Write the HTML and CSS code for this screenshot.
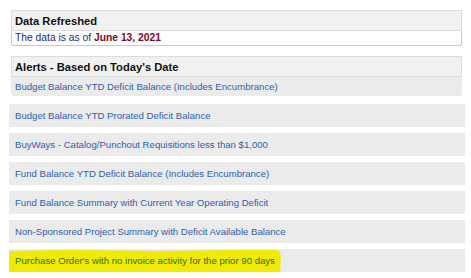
FILE: index.html
```html
<!DOCTYPE html>
<html>
<head>
<meta charset="utf-8">
<link rel="stylesheet" href="styles.css">
</head>
<body>
<div class="page">
  <section class="panel refresh">
    <div class="panel-head">Data Refreshed</div>
    <div class="panel-body">The data is as of <b class="date">June 13, 2021</b></div>
  </section>
  <section class="panel alerts">
    <div class="panel-head">Alerts - Based on Today's Date</div>
    <div class="panel-item">Budget Balance YTD Deficit Balance (Includes Encumbrance)</div>
  </section>
  <ul class="list">
    <li class="item">Budget Balance YTD Prorated Deficit Balance</li>
    <li class="item">BuyWays - Catalog/Punchout Requisitions less than $1,000</li>
    <li class="item">Fund Balance YTD Deficit Balance (Includes Encumbrance)</li>
    <li class="item">Fund Balance Summary with Current Year Operating Deficit</li>
    <li class="item">Non-Sponsored Project Summary with Deficit Available Balance</li>
    <li class="item marked">
      <svg class="marker" width="276" height="29" viewBox="0 0 276 29" aria-hidden="true">
        <path d="M0 2 L60 1 L150 2 L230 1 L268 1 L271 3 L272 9 L271 18 L272 24 L270 27 L200 27 L120 28 L40 27 L0 28 Z" fill="#eeea00"/>
      </svg>
      <span class="marked-text">Purchase Order's with no invoice activity for the prior 90 days</span>
    </li>
  </ul>
</div>
</body>
</html>
```

FILE: styles.css
```css
html, body {
  margin: 0;
  padding: 0;
  background: #ffffff;
}
.page {
  padding: 10px 6px 0 9px;
  font-family: "Liberation Sans", Arial, sans-serif;
}
.panel {
  margin: 0 3px 0 2px;
}
.panel-head {
  height: 19px;
  line-height: 20px;
  background: #f1f1f1;
  border: 1px solid #dcdcdc;
  padding-left: 3px;
  font-weight: bold;
  font-size: 11.2px;
  color: #111111;
}
.panel-body {
  height: 14px;
  line-height: 14px;
  background: #ffffff;
  border: 1px solid #c7c8d0;
  border-top: none;
  border-radius: 0 0 3px 3px;
  padding-left: 3px;
  font-size: 10.3px;
  color: #1f2a78;
}
.date {
  color: #7a0a2a;
}
.refresh {
  margin-bottom: 10px;
}
.panel-item {
  height: 19px;
  line-height: 19px;
  background: #ebebeb;
  border-radius: 0 0 3px 3px;
  padding-left: 4px;
  font-size: 9.6px;
  color: #2d5fae;
}
.list {
  list-style: none;
  margin: 8px 0 0 0;
  padding: 0;
  display: flex;
  flex-direction: column;
  gap: 6px;
}
.item {
  height: 23px;
  line-height: 23px;
  background: #ebebeb;
  padding-left: 6px;
  font-size: 9.6px;
  color: #2d5fae;
}
.marked {
  position: relative;
}
.marker {
  position: absolute;
  left: 0;
  top: 0;
}
.marked-text {
  position: relative;
  color: #3a6b1a;
}
```
